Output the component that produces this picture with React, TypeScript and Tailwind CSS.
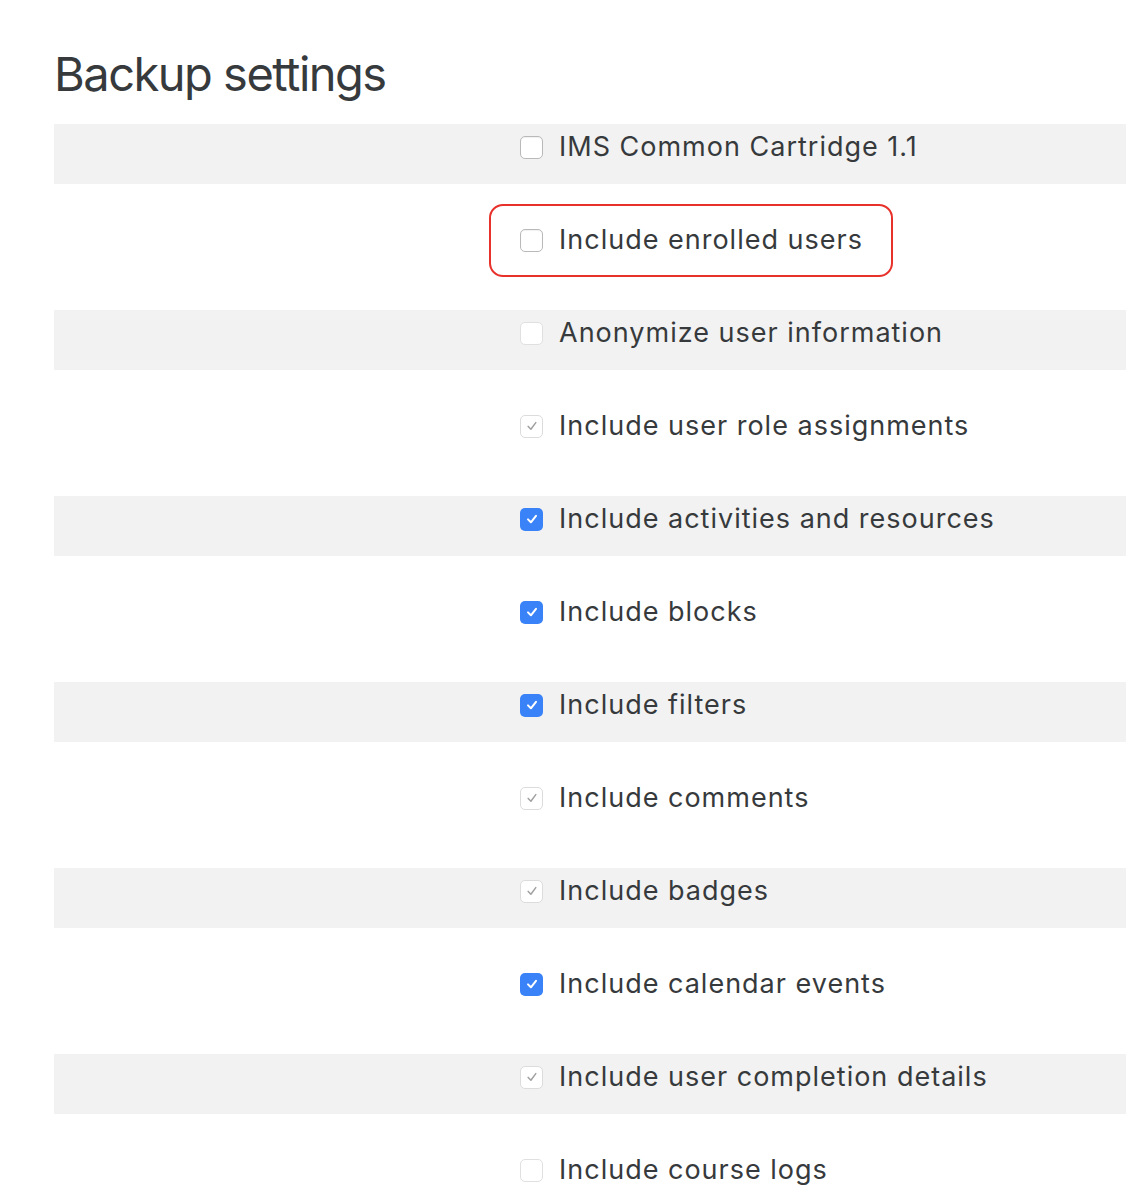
import React from "react";

type State = "off" | "offDisabled" | "on" | "onDisabled";

const rows: { label: string; state: State }[] = [
  { label: "IMS Common Cartridge 1.1", state: "off" },
  { label: "Include enrolled users", state: "off" },
  { label: "Anonymize user information", state: "offDisabled" },
  { label: "Include user role assignments", state: "onDisabled" },
  { label: "Include activities and resources", state: "on" },
  { label: "Include blocks", state: "on" },
  { label: "Include filters", state: "on" },
  { label: "Include comments", state: "onDisabled" },
  { label: "Include badges", state: "onDisabled" },
  { label: "Include calendar events", state: "on" },
  { label: "Include user completion details", state: "onDisabled" },
  { label: "Include course logs", state: "offDisabled" },
];

function Box({ state }: { state: State }) {
  if (state === "on") {
    return (
      <div className="flex h-[23px] w-[23px] shrink-0 items-center justify-center rounded-[5px] bg-[#3a82f7]">
        <svg width="14" height="14" viewBox="0 0 14 14" fill="none">
          <path d="M3 7.4 L5.9 10.3 L11 3.8" stroke="white" strokeWidth="2" strokeLinecap="round" strokeLinejoin="round" />
        </svg>
      </div>
    );
  }
  if (state === "onDisabled") {
    return (
      <div className="flex h-[23px] w-[23px] shrink-0 items-center justify-center rounded-[5px] border border-[#dcdcdc] bg-white">
        <svg width="14" height="14" viewBox="0 0 14 14" fill="none">
          <path d="M3.2 7.4 L5.9 10.2 L10.8 3.6" stroke="#a0a0a0" strokeWidth="1.5" strokeLinecap="round" strokeLinejoin="round" />
        </svg>
      </div>
    );
  }
  if (state === "offDisabled") {
    return <div className="h-[23px] w-[23px] shrink-0 rounded-[5px] border border-[#e0e0e0] bg-white" />;
  }
  return <div className="h-[23px] w-[23px] shrink-0 rounded-[5px] border border-[#b9b9b9] bg-white shadow-[inset_0_1px_1px_rgba(0,0,0,0.06)]" />;
}

export default function App() {
  return (
    <div
      className="min-h-[1194px] w-[1126px] overflow-hidden bg-white pl-[54px] text-[#373a3c]"
      style={{ fontFamily: "Inter, Roboto, 'Liberation Sans', Arial, sans-serif" }}
    >
      <h1 className="pt-[44px] text-[47px] font-normal leading-[60px] tracking-[-1.5px]">Backup settings</h1>
      <div className="mt-[20px] flex flex-col gap-[33px]">
        {rows.map((r, i) => (
          <div
            key={r.label}
            className={`relative h-[60px] w-[1100px] ${i % 2 === 0 ? "bg-[#f2f2f2]" : "bg-white"}`}
          >
            <div className="ml-[466px] mt-[11px] flex h-[24px] items-center gap-[16px]">
              <Box state={r.state} />
              <span className="whitespace-nowrap text-[27px] leading-[24px] tracking-[1px]">{r.label}</span>
            </div>
            {i === 1 && (
              <div className="pointer-events-none absolute left-[435px] top-[-13px] h-[73px] w-[404px] rounded-[14px] border-2 border-[#e8312a]" />
            )}
          </div>
        ))}
      </div>
    </div>
  );
}
